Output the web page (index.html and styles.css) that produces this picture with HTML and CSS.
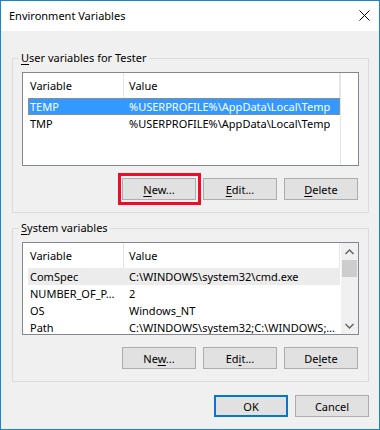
FILE: index.html
```html
<!DOCTYPE html>
<html lang="en">
<head>
    <meta charset="UTF-8"/>
    <title>Environment Variables</title>
    <link rel="stylesheet" href="styles.css">
</head>
<body>

<div class="window">
    <div class="titlebar">
        <span class="title">Environment Variables</span>
        <svg class="close-icon" width="11" height="11" viewBox="0 0 11 11">
            <path d="M0.5 0.5 L10.5 10.5 M10.5 0.5 L0.5 10.5"/>
        </svg>
    </div>

    <div class="dialog-body">
        <fieldset class="group">
            <legend><u>U</u>ser variables for Tester</legend>
            <div class="list">
                <div class="list-main list-main-lined">
                    <div class="list-head">
                        <div class="head-var">Variable</div>
                        <div class="head-val">Value</div>
                    </div>
                    <div class="row selected">
                        <div class="cell-var">TEMP</div>
                        <div class="cell-val">%USERPROFILE%\AppData\Local\Temp</div>
                    </div>
                    <div class="row">
                        <div class="cell-var">TMP</div>
                        <div class="cell-val">%USERPROFILE%\AppData\Local\Temp</div>
                    </div>
                </div>
            </div>
            <div class="btn-row">
                <button class="btn btn-marked"><u>N</u>ew...</button>
                <button class="btn"><u>E</u>dit...</button>
                <button class="btn"><u>D</u>elete</button>
            </div>
        </fieldset>

        <fieldset class="group group-system">
            <legend><u>S</u>ystem variables</legend>
            <div class="list list-short">
                <div class="list-main">
                    <div class="list-head">
                        <div class="head-var">Variable</div>
                        <div class="head-val">Value</div>
                    </div>
                    <div class="row inactive">
                        <div class="cell-var">ComSpec</div>
                        <div class="cell-val">C:\WINDOWS\system32\cmd.exe</div>
                    </div>
                    <div class="row">
                        <div class="cell-var">NUMBER_OF_P…</div>
                        <div class="cell-val">2</div>
                    </div>
                    <div class="row">
                        <div class="cell-var">OS</div>
                        <div class="cell-val">Windows_NT</div>
                    </div>
                    <div class="row">
                        <div class="cell-var">Path</div>
                        <div class="cell-val">C:\WINDOWS\system32;C:\WINDOWS;…</div>
                    </div>
                </div>
                <div class="scrollbar">
                    <div class="scroll-arrow">
                        <svg width="9" height="6" viewBox="0 0 9 6"><polyline points="0.5,5 4.5,1 8.5,5"/></svg>
                    </div>
                    <div class="scroll-thumb"></div>
                    <div class="scroll-track"></div>
                    <div class="scroll-arrow">
                        <svg width="9" height="6" viewBox="0 0 9 6"><polyline points="0.5,1 4.5,5 8.5,1"/></svg>
                    </div>
                </div>
            </div>
            <div class="btn-row">
                <button class="btn">Ne<u>w</u>...</button>
                <button class="btn">Ed<u>i</u>t...</button>
                <button class="btn">De<u>l</u>ete</button>
            </div>
        </fieldset>

        <div class="dialog-buttons">
            <button class="btn btn-default">OK</button>
            <button class="btn">Cancel</button>
        </div>
    </div>
</div>

</body>
</html>
```

FILE: styles.css
```css
:root {
    --window-border: #1883d7;
    --face-color: #f0f0f0;
    --group-border: #dcdcdc;
    --list-border: #828790;
    --grid-line: #e5e5e5;
    --button-face: #e1e1e1;
    --button-border: #adadad;
    --accent: #0078d7;
}

* {
    margin: 0;
    padding: 0;
    box-sizing: border-box;
}

body {
    font-family: 'Noto Sans', sans-serif;
    font-size: 11px;
    color: #000;
    background-color: var(--face-color);
}

u {
    text-decoration-thickness: 1px;
    text-underline-offset: 2px;
}

.window {
    width: 380px;
    height: 430px;
    border: 1px solid var(--window-border);
    background-color: var(--face-color);
    display: flex;
    flex-direction: column;
}

.titlebar {
    height: 30px;
    background-color: white;
    display: flex;
    justify-content: space-between;
    align-items: flex-start;
    padding-left: 8px;
}

.title {
    line-height: 30px;
}

.close-icon {
    margin-top: 9px;
    margin-right: 9px;
    fill: none;
    stroke: #000;
    stroke-width: 1;
}

.dialog-body {
    padding: 0 10px 0 11px;
}

.group {
    margin-top: 19px;
    border: 1px solid var(--group-border);
    padding: 6px 9px 12px 9px;
}

.group-system {
    margin-top: 7px;
}

.group legend {
    line-height: 16px;
    padding: 0 2px;
    margin-left: -3px;
}

.list {
    height: 94px;
    border: 1px solid var(--list-border);
    background-color: white;
    display: flex;
    overflow: hidden;
    padding-left: 5px;
}

.list-short {
    height: 93px;
}

.list-main {
    width: 312px;
}

.list-main-lined {
    border-right: 1px solid var(--grid-line);
    width: 313px;
}

.list-head {
    display: flex;
    height: 25px;
    line-height: 25px;
}

.head-var {
    width: 96px;
    padding-left: 2px;
    border-right: 1px solid var(--grid-line);
}

.head-val {
    width: 216px;
    padding-left: 5px;
    border-right: 1px solid var(--grid-line);
}

.row {
    display: flex;
    height: 17px;
    line-height: 17px;
}

.row.selected {
    background-color: #3399ff;
    color: white;
    outline: 1px dotted #d9822b;
    outline-offset: -1px;
}

.row.inactive {
    background-color: #ececec;
}

.cell-var {
    width: 95px;
    padding-left: 2px;
    white-space: nowrap;
    overflow: hidden;
}

.cell-val {
    width: 217px;
    padding-left: 6px;
    white-space: nowrap;
    overflow: hidden;
}

.scrollbar {
    width: 17px;
    margin-left: 1px;
    background-color: var(--face-color);
    display: flex;
    flex-direction: column;
}

.scroll-arrow {
    height: 17px;
    display: flex;
    align-items: center;
    justify-content: center;
}

.scroll-arrow svg {
    fill: none;
    stroke: #606060;
    stroke-width: 1.4;
}

.scroll-thumb {
    height: 17px;
    margin: 0 1px;
    background-color: #cdcdcd;
}

.scroll-track {
    flex: 1;
}

.btn-row {
    margin-top: 12px;
    display: flex;
    justify-content: flex-end;
    gap: 7px;
    padding-right: 1px;
}

.btn {
    width: 74px;
    height: 22px;
    border: 1px solid var(--button-border);
    background-color: var(--button-face);
    font-family: inherit;
    font-size: 11px;
    color: #000;
    position: relative;
}

.btn-marked::after {
    content: "";
    position: absolute;
    top: -6px;
    bottom: -6px;
    left: -5px;
    right: -6px;
    border: 3px solid #e81123;
}

.btn-default {
    border: 2px solid var(--accent);
}

.dialog-buttons {
    margin-top: 13px;
    display: flex;
    justify-content: flex-end;
    gap: 7px;
}
```
